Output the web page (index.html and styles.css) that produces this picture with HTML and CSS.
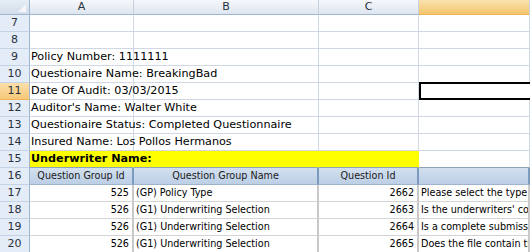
FILE: index.html
```html
<!DOCTYPE html>
<html>
<head>
<meta charset="utf-8">
<link rel="stylesheet" href="styles.css">
</head>
<body>
<div class="sheet">
  <div class="hdr corner"><span class="tri"></span></div>
  <div class="hdr col">A</div>
  <div class="hdr col">B</div>
  <div class="hdr col">C</div>
  <div class="hdr col sel"></div>

  <div class="rn">7</div><div class="c"></div><div class="c"></div><div class="c"></div><div class="c"></div>
  <div class="rn">8</div><div class="c"></div><div class="c"></div><div class="c"></div><div class="c"></div>
  <div class="rn">9</div><div class="c ov">Policy Number: 1111111</div><div class="c"></div><div class="c"></div><div class="c"></div>
  <div class="rn">10</div><div class="c ov">Questionaire Name: BreakingBad</div><div class="c"></div><div class="c"></div><div class="c"></div>
  <div class="rn rsel">11</div><div class="c ov">Date Of Audit: 03/03/2015</div><div class="c"></div><div class="c"></div><div class="c active"></div>
  <div class="rn">12</div><div class="c ov">Auditor's Name: Walter White</div><div class="c"></div><div class="c"></div><div class="c"></div>
  <div class="rn">13</div><div class="c ov">Questionaire Status: Completed Questionnaire</div><div class="c"></div><div class="c"></div><div class="c"></div>
  <div class="rn">14</div><div class="c ov">Insured Name: Los Pollos Hermanos</div><div class="c"></div><div class="c"></div><div class="c"></div>
  <div class="rn">15</div><div class="c yel ov b">Underwriter Name:</div><div class="c yel"></div><div class="c yel"></div><div class="c yl"></div>

  <div class="rn">16</div><div class="th">Question Group Id</div><div class="th">Question Group Name</div><div class="th">Question Id</div><div class="th"></div>

  <div class="rn">17</div><div class="td r">525</div><div class="td">(GP) Policy Type</div><div class="td r">2662</div><div class="td">Please select the type of policy</div>
  <div class="rn">18</div><div class="td r">526</div><div class="td">(G1) Underwriting Selection</div><div class="td r">2663</div><div class="td">Is the underwriters' comment complete?</div>
  <div class="rn">19</div><div class="td r">526</div><div class="td">(G1) Underwriting Selection</div><div class="td r">2664</div><div class="td">Is a complete submission on file?</div>
  <div class="rn">20</div><div class="td r">526</div><div class="td">(G1) Underwriting Selection</div><div class="td r">2665</div><div class="td">Does the file contain the application?</div>
</div>
</body>
</html>
```

FILE: styles.css
```css
html, body {
  margin: 0;
  padding: 0;
  background: #ffffff;
  overflow: hidden;
}
.sheet {
  display: grid;
  grid-template-columns: 30px 104px 185px 100px 111px;
  grid-template-rows: 15px repeat(14, 17px);
  font-family: "DejaVu Sans", sans-serif;
  font-size: 11.2px;
  color: #000;
  width: 530px;
  overflow: hidden;
}
.sheet > div {
  box-sizing: border-box;
  white-space: nowrap;
  overflow: hidden;
  line-height: 16px;
}
.hdr {
  background: linear-gradient(#f6f8fb, #dde5ef);
  border-right: 1px solid #c5d1e0;
  border-bottom: 1px solid #9eb6ce;
  color: #27303c;
  text-align: center;
  line-height: 14px !important;
  font-size: 11px;
}
.corner {
  position: relative;
  background: linear-gradient(#e6edf6, #d3dcea);
  border-right: 1px solid #9eb6ce;
}
.tri {
  position: absolute;
  right: 3px;
  bottom: 2px;
  width: 0;
  height: 0;
  border-left: 8px solid transparent;
  border-bottom: 8px solid #f4f6f9;
}
.col.sel {
  background: linear-gradient(#fbe2b1, #f4c56a);
  border-bottom: 1px solid #f2b25a;
}
.rn {
  background: #e4ecf7;
  border-right: 1px solid #9eb6ce;
  border-bottom: 1px solid #c5d3e6;
  color: #27303c;
  text-align: center;
  font-size: 11px;
}
.rn.rsel {
  background: linear-gradient(#fbe0ab, #f6c878);
  border-bottom: 1px solid #f2b25a;
}
.c {
  border-right: 1px solid #d0d7e5;
  border-bottom: 1px solid #d0d7e5;
  padding-left: 1px;
}
.sheet > .ov {
  overflow: visible;
  position: relative;
  z-index: 1;
}
.active {
  border: 2px solid #000 !important;
  border-right: none !important;
  margin-top: -1px;
  height: 18px;
}
.yel {
  background: #ffff00;
  border-right-color: #ffff00;
  border-bottom: 1px solid #8ea2b8;
}
.yl {
  border-bottom: 1px solid #8ea2b8;
}
.b {
  font-weight: bold;
}
.th, .td {
  font-family: "DejaVu Sans Condensed", "DejaVu Sans", sans-serif;
  font-stretch: condensed;
  font-size: 10.7px;
}
.th {
  background: linear-gradient(#d3e0ef, #bccfe6);
  border-right: 2px solid #7c9bbd;
  border-bottom: 1px solid #9fb4cc;
  text-align: center;
  color: #1a1a1a;
}
.td {
  border-right: 2px solid #c8c8c8;
  border-bottom: 1px solid #d4d4d4;
  padding-left: 2px;
}
.td.r {
  text-align: right;
  padding-right: 3px;
  padding-left: 0;
}
```
